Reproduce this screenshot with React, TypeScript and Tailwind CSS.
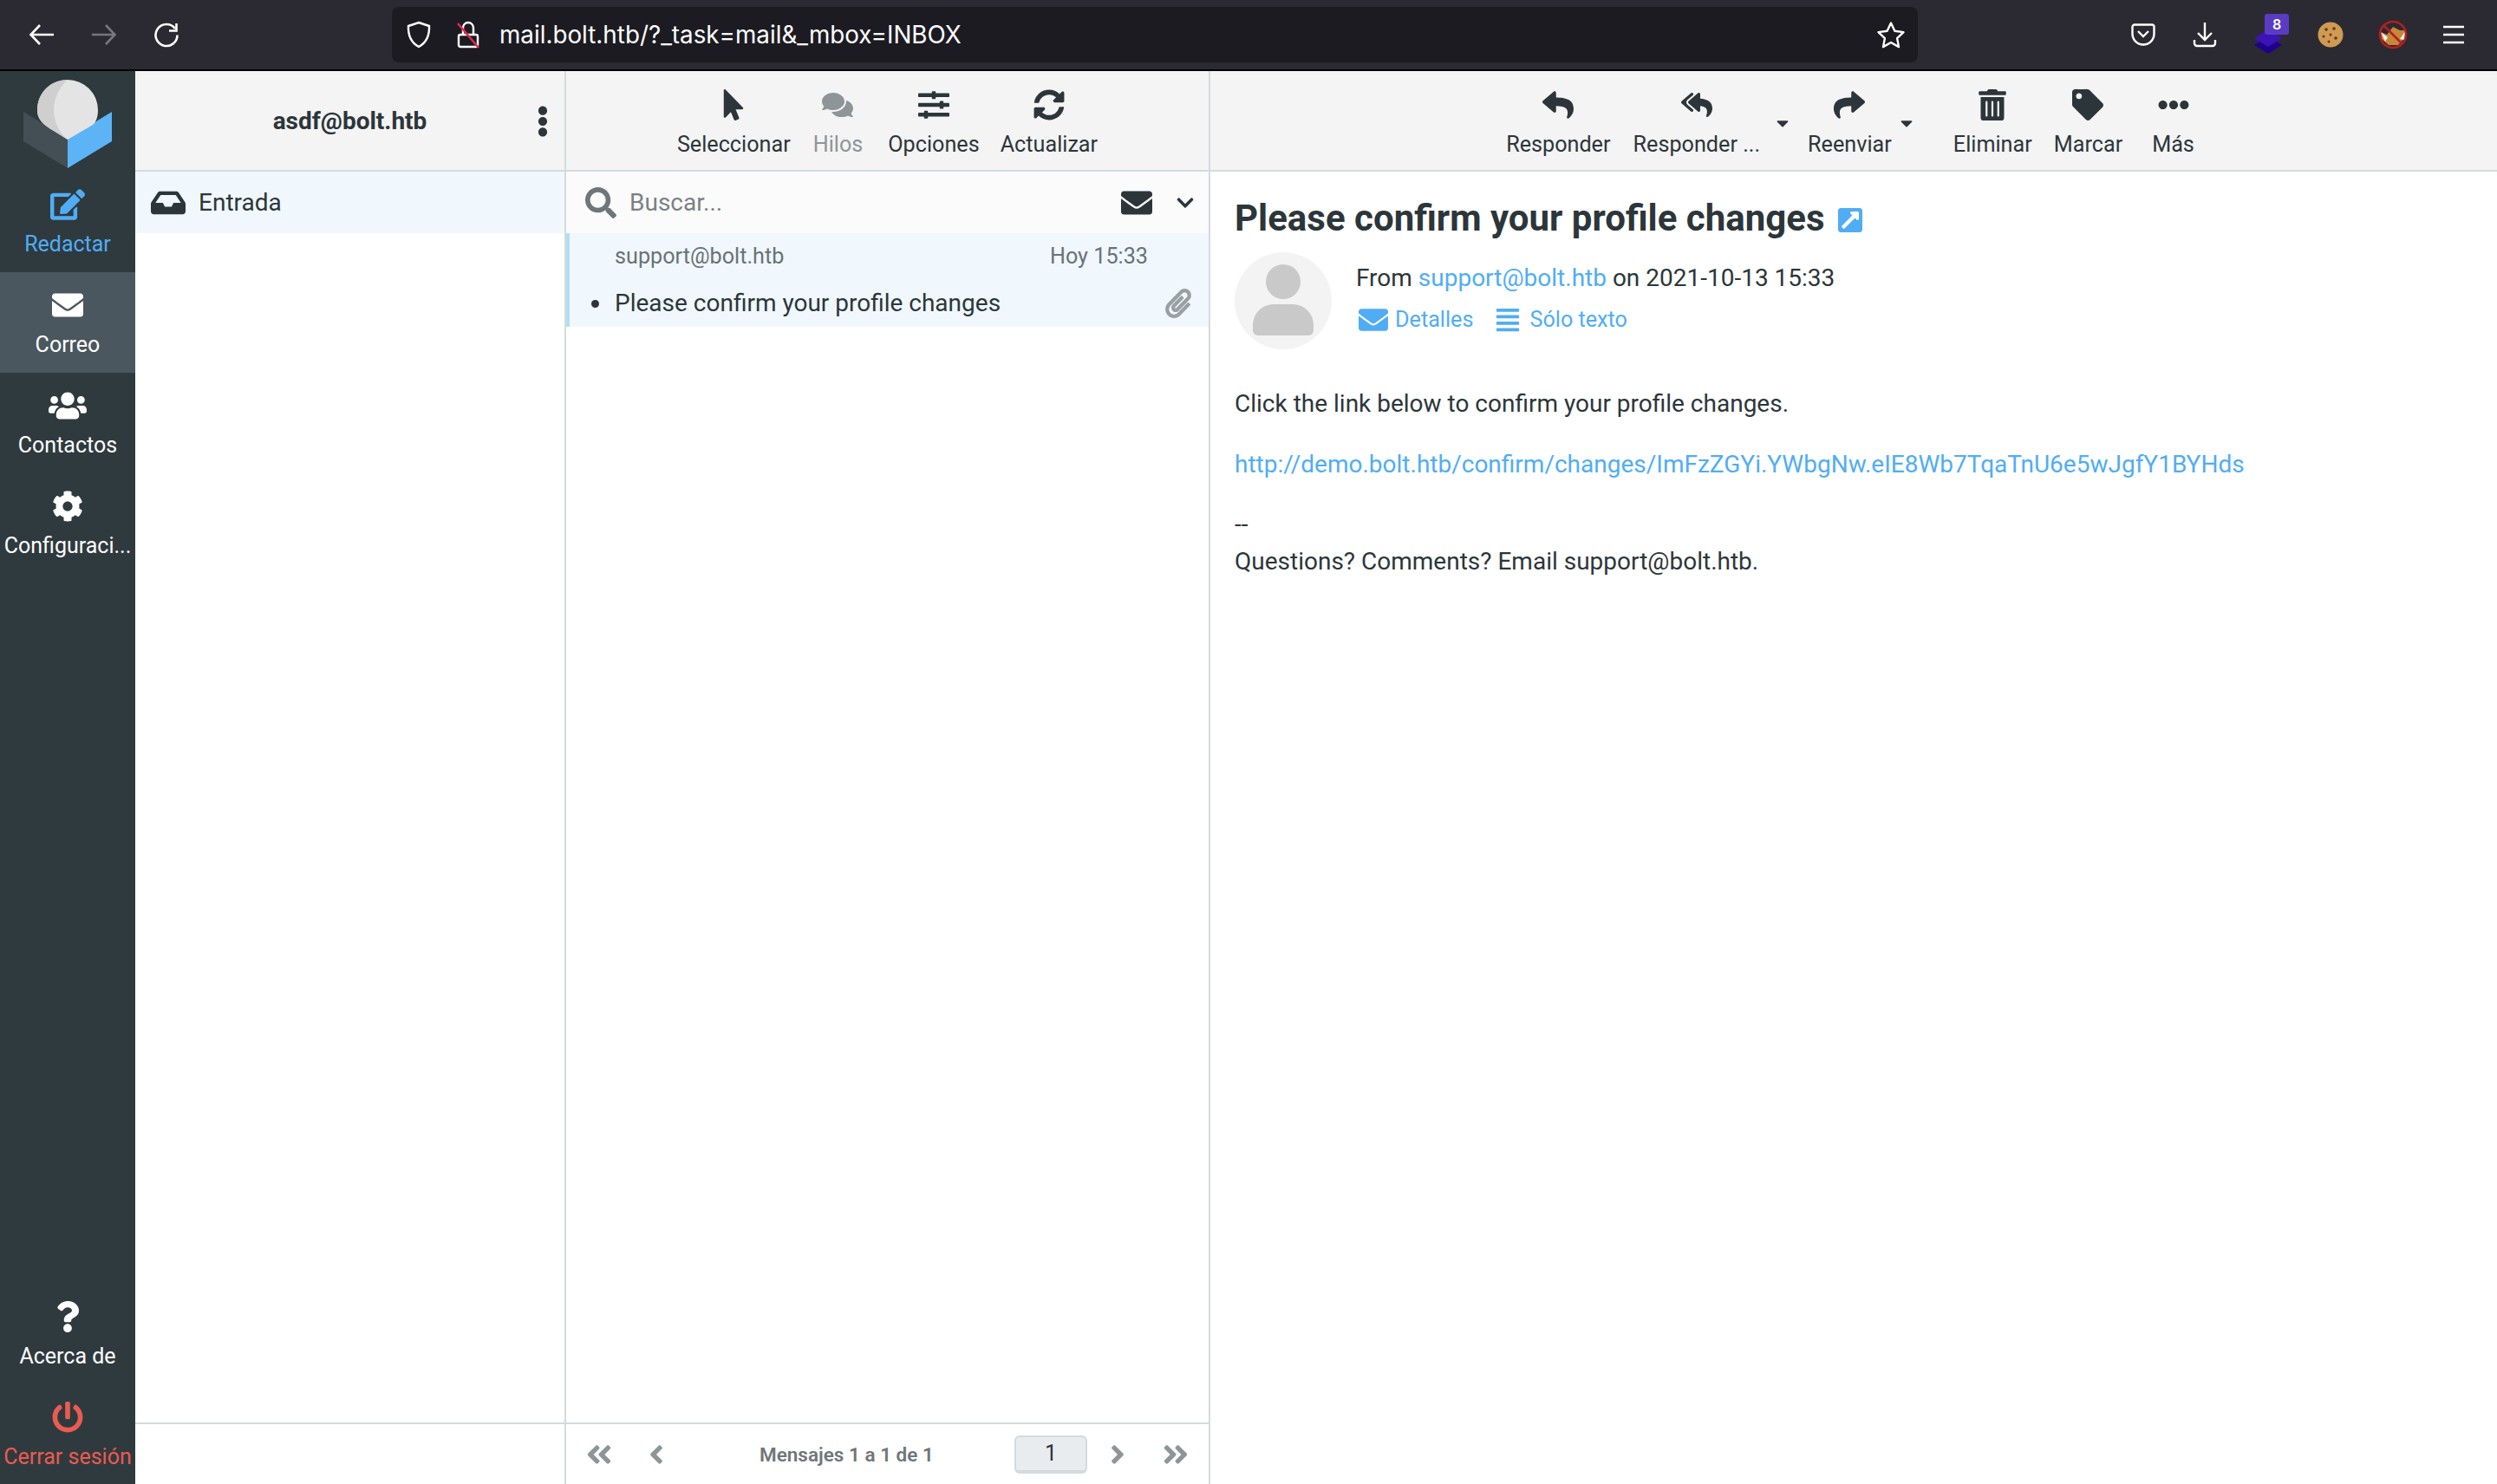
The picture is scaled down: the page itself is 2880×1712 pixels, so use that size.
import type { ReactNode } from "react";
import {
  FaAlignJustify,
  FaAngleDoubleLeft,
  FaAngleDoubleRight,
  FaAngleLeft,
  FaAngleRight,
  FaCaretDown,
  FaChevronDown,
  FaCog,
  FaComments,
  FaEdit,
  FaEllipsisH,
  FaEllipsisV,
  FaEnvelope,
  FaExternalLinkSquareAlt,
  FaInbox,
  FaMousePointer,
  FaPaperclip,
  FaPowerOff,
  FaQuestion,
  FaReply,
  FaReplyAll,
  FaSearch,
  FaShare,
  FaSlidersH,
  FaSyncAlt,
  FaTag,
  FaTrashAlt,
  FaUsers,
} from "react-icons/fa";

const BrowserBar = () => (
  <div className="flex h-[82px] items-start border-b-2 border-black bg-[#2b2a33] text-white">
    <div className="flex h-[80px] w-[452px] items-center pl-[33px] gap-[42px]">
      <svg width="30" height="28" viewBox="0 0 30 28" fill="none" stroke="white" strokeWidth="2.6">
        <path d="M29 14H3M13 3 2.500 14 13 25" />
      </svg>
      <svg width="30" height="28" viewBox="0 0 30 28" fill="none" stroke="#77767d" strokeWidth="2.6">
        <path d="M1 14h26M17 3l10.500 11L17 25" />
      </svg>
      <svg width="30" height="30" viewBox="0 0 30 30" fill="none" stroke="white" strokeWidth="2.6">
        <path d="M25 8a12.500 12.500 0 1 0 2.500 7.500" />
        <path d="M26.500 2v8.500H18" />
      </svg>
    </div>
    <div className="mt-[8px] flex h-[64px] w-[1760px] items-center rounded-[8px] bg-[#1c1b22] pl-[16px] pr-[16px]">
      <svg width="30" height="32" viewBox="0 0 30 32" fill="none" stroke="white" strokeWidth="2.4">
        <path d="M15 2 27 6c.500 11-3 19-12 24C6 25 2.500 17 3 6Z" />
      </svg>
      <svg className="ml-[27px]" width="30" height="32" viewBox="0 0 30 32" fill="none">
        <path d="M6 16h18a2 2 0 0 1 2 2v10a2 2 0 0 1-2 2H6a2 2 0 0 1-2-2V18a2 2 0 0 1 2-2Z" stroke="white" strokeWidth="2.4" />
        <path d="M9 16V8a6 6 0 0 1 12 0v8" stroke="white" strokeWidth="2.4" />
        <path d="M3 3 27 31" stroke="#e22850" strokeWidth="2.6" />
      </svg>
      <span className="ml-[21px] pt-[2px] font-['Inter',sans-serif] text-[27.800px] text-white">
        mail.bolt.htb/?_task=mail&amp;_mbox=INBOX
      </span>
      <svg className="ml-auto mr-[-2px]" width="34" height="32" viewBox="0 0 34 32" fill="none" stroke="white" strokeWidth="2.4" strokeLinejoin="round">
        <path d="m17 2.500 4.400 9.300 10.100 1.300-7.400 7 1.900 10L17 25l-9 5.100 1.900-10-7.400-7 10.100-1.300Z" />
      </svg>
    </div>
    <div className="flex h-[80px] flex-1 items-center pl-[246px] gap-[43px]">
      <svg width="28" height="26" viewBox="0 0 28 26" fill="none" stroke="white" strokeWidth="2.4">
        <path d="M4 1.500h20A2.500 2.500 0 0 1 26.500 4v8a12.500 12.500 0 0 1-25 0V4A2.500 2.500 0 0 1 4 1.500Z" />
        <path d="m8 9 6 6 6-6" />
      </svg>
      <svg width="28" height="30" viewBox="0 0 28 30" fill="none" stroke="white" strokeWidth="2.4">
        <path d="M14 1v19M6 13l8 8 8-8M2 21v4a3 3 0 0 0 3 3h18a3 3 0 0 0 3-3v-4" />
      </svg>
      <div className="relative h-[40px] w-[32px]">
        <svg className="mt-[14px]" width="32" height="28" viewBox="0 0 32 28">
          <path d="M16 8 32 18 16 28 0 18Z" fill="#20008a" />
          <path d="M16 0 32 10 16 20 0 10Z" fill="#3b14b8" />
        </svg>
        <span className="absolute left-[12px] top-[-4px] flex h-[24px] w-[28px] items-center justify-center rounded-[3px] bg-[#5b3bc4] font-['Inter',sans-serif] text-[16px] font-semibold text-white">
          8
        </span>
      </div>
      <svg className="ml-[-2px]" width="30" height="30" viewBox="0 0 30 30">
        <circle cx="15" cy="15" r="14.500" fill="#cf9a52" />
        <circle cx="10" cy="9" r="1.800" fill="#5e3a1a" />
        <circle cx="19" cy="8" r="1.800" fill="#5e3a1a" />
        <circle cx="15" cy="15" r="1.500" fill="#5e3a1a" />
        <circle cx="7" cy="17" r="1.500" fill="#5e3a1a" />
        <circle cx="21" cy="19" r="1.800" fill="#5e3a1a" />
        <circle cx="13" cy="23" r="1.500" fill="#5e3a1a" />
      </svg>
      <svg className="ml-[-3px]" width="34" height="34" viewBox="0 0 34 34">
        <path d="M3 14 10 17l7-9 8 4 6 0v8l-8 9H12L4 22Z" fill="#c9863b" />
        <path d="M3 14l8 6-3 5ZM31 13l-6 9 5 1Z" fill="#f3f0ea" />
        <circle cx="17" cy="17" r="15" fill="none" stroke="#b3201f" strokeWidth="2.500" />
        <path d="M6.500 6.500 27.500 27.500" stroke="#b3201f" strokeWidth="2.500" />
      </svg>
      <svg className="ml-[-3px]" width="26" height="22" viewBox="0 0 26 22" stroke="white" strokeWidth="2.400">
        <path d="M1 2h24M1 11h24M1 20h24" />
      </svg>
    </div>
  </div>
);

const Logo = () => (
  <div className="flex h-[116px] shrink-0 items-start">
    <svg width="156" height="116" viewBox="0 0 156 116">
      <path d="M27 47 78 78v34L27 81Z" fill="#434f54" />
      <path d="M129 47 78 78v34l51-31Z" fill="#5cb4f7" />
      <path d="M43 45a35 35 0 1 1 70 0c0 9-3 15-6 17L78 79 62 69C50 62 43 56 43 45Z" fill="#e4e4e4" />
      <path d="M78 10c-20 0-35 15-35 35 0 11 7 17 19 24l16 10c-9-7-16-20-16-34 0-13 6-26 16-35Z" fill="#cfcfcf" />
    </svg>
  </div>
);

const NavItem = ({
  icon,
  label,
  className = "text-white",
  pad = "pt-[19px]",
  size = "text-[36px]",
}: {
  icon: ReactNode;
  label: string;
  className?: string;
  pad?: string;
  size?: string;
}) => (
  <div className={`flex h-[116px] w-full shrink-0 flex-col items-center ${pad} ${className}`}>
    <div className={`flex h-[38px] items-center ${size}`}>{icon}</div>
    <div className="mt-[9px] w-full overflow-hidden text-center text-[25px] leading-[36px] whitespace-nowrap">{label}</div>
  </div>
);

const Sidebar = () => (
  <div className="flex w-[156px] shrink-0 flex-col bg-[#2f3a3e]">
    <Logo />
    <NavItem icon={<FaEdit />} label="Redactar" className="text-[#50adf5]" size="text-[40px]" />
    <NavItem icon={<FaEnvelope />} label="Correo" className="bg-[#4a575e] text-white" />
    <NavItem icon={<FaUsers />} label="Contactos" size="text-[44px]" />
    <NavItem icon={<FaCog />} label="Configuraci..." />
    <div className="mt-auto">
      <NavItem icon={<FaQuestion />} label="Acerca de" pad="pt-[20px]" />
      <NavItem icon={<FaPowerOff />} label="Cerrar sesión" pad="pt-[20px]" className="text-[#ea5b52]" />
    </div>
  </div>
);

const ToolButton = ({
  icon,
  label,
  muted,
  caret,
  className,
}: {
  icon: ReactNode;
  label: string;
  muted?: boolean;
  caret?: string;
  className?: string;
}) => (
  <div className={`relative flex flex-col items-center ${muted ? "text-[#8e9598]" : "text-[#2c363a]"} ${className ?? ""}`}>
    <div className="flex h-[40px] items-center text-[36px]">{icon}</div>
    <div className="mt-[8px] text-[25.200px] leading-[36px] whitespace-nowrap">{label}</div>
    {caret && <FaCaretDown className={`absolute top-[30px] text-[22px] text-[#2c363a] ${caret}`} />}
  </div>
);

const AccountColumn = () => (
  <div className="flex w-[497px] shrink-0 flex-col border-r-2 border-[#d4dbde]">
    <div className="relative flex h-[116px] shrink-0 items-center justify-center border-b-2 border-[#d4dbde] bg-[#f4f4f4] pt-[2px]">
      <span className="text-[28px] font-bold text-[#2c363a]">asdf@bolt.htb</span>
      <FaEllipsisV className="absolute right-[7px] top-[40px] text-[36px] text-[#2c363a]" />
    </div>
    <div className="flex h-[71px] shrink-0 items-center bg-[#f0f8fd] pl-[18px] text-[#2c363a]">
      <FaInbox className="text-[40px]" />
      <span className="ml-[15px] text-[28px]">Entrada</span>
    </div>
    <div className="flex-1 bg-white" />
    <div className="h-[71px] shrink-0 border-t-2 border-[#d4dbde] bg-white" />
  </div>
);

const ListColumn = () => (
  <div className="flex w-[743px] shrink-0 flex-col border-r-2 border-[#d4dbde]">
    <div className="flex h-[116px] shrink-0 items-start justify-center border-b-2 border-[#d4dbde] bg-[#f4f4f4] pt-[19px]">
      <ToolButton icon={<FaMousePointer />} label="Seleccionar" />
      <ToolButton className="ml-[26px]" icon={<FaComments />} label="Hilos" muted />
      <ToolButton className="ml-[29px]" icon={<FaSlidersH />} label="Opciones" />
      <ToolButton className="ml-[24px]" icon={<FaSyncAlt />} label="Actualizar" />
    </div>
    <div className="flex h-[71px] shrink-0 items-center bg-[#fbfbfb] pl-[22px] pr-[16px]">
      <FaSearch className="text-[36px] text-[#6f7679]" />
      <span className="ml-[15px] text-[28px] text-[#7a8184]">Buscar...</span>
      <FaEnvelope className="ml-auto text-[36px] text-[#2c363a]" />
      <FaChevronDown className="ml-[27px] text-[22px] text-[#2c363a]" />
    </div>
    <div className="flex h-[108px] shrink-0 flex-col border-l-4 border-[#b3ddf6] bg-[#f0f8fd] pl-[52px] pr-[14px]">
      <div className="flex h-[53px] items-center justify-between pr-[56px] text-[25.200px] text-[#6a7275]">
        <span>support@bolt.htb</span>
        <span>Hoy 15:33</span>
      </div>
      <div className="relative flex h-[55px] items-center text-[28px] text-[#2c363a]">
        <span className="absolute left-[-27px] top-[24px] h-[9px] w-[9px] rounded-full bg-[#2c363a]" />
        <span>Please confirm your profile changes</span>
        <FaPaperclip className="ml-auto mr-[4px] text-[34px] text-[#999fa2]" />
      </div>
    </div>
    <div className="flex-1 bg-white" />
    <div className="flex h-[71px] shrink-0 items-center border-t-2 border-[#d4dbde] bg-white pl-[18px] text-[#8e9598]">
      <div className="flex w-[40px] justify-center text-[34px]">
        <FaAngleDoubleLeft />
      </div>
      <div className="ml-[26px] flex w-[40px] justify-center text-[34px]">
        <FaAngleLeft />
      </div>
      <span className="ml-[99px] mt-[2px] w-[294px] text-[22.500px] font-semibold whitespace-nowrap text-[#6f7679]">Mensajes 1 a 1 de 1</span>
      <div className="flex h-[44px] w-[84px] items-center justify-center rounded-[6px] border-2 border-b-4 border-[#d4dadd] bg-[#e9ecef] text-[25.200px] text-[#2c363a]">
        1
      </div>
      <div className="ml-[15px] flex w-[40px] justify-center text-[34px]">
        <FaAngleRight />
      </div>
      <div className="ml-[27px] flex w-[40px] justify-center text-[34px]">
        <FaAngleDoubleRight />
      </div>
    </div>
  </div>
);

const MessageColumn = () => (
  <div className="flex min-w-0 flex-1 flex-col bg-white">
    <div className="flex h-[116px] shrink-0 items-start justify-center border-b-2 border-[#d4dbde] bg-[#f4f4f4] pr-[8px] pt-[19px]">
      <ToolButton icon={<FaReply />} label="Responder" />
      <ToolButton className="ml-[26px]" icon={<FaReplyAll />} label="Responder ..." caret="right-[-37px]" />
      <ToolButton className="ml-[55px]" icon={<FaShare />} label="Reenviar" caret="right-[-28px]" />
      <ToolButton className="ml-[71px]" icon={<FaTrashAlt />} label="Eliminar" />
      <ToolButton className="ml-[25px]" icon={<FaTag />} label="Marcar" />
      <ToolButton className="ml-[34px]" icon={<FaEllipsisH />} label="Más" />
    </div>
    <div className="pl-[28px] text-[#2c363a]">
      <div className="mt-[14px] flex h-[58px] items-center pt-[22px]">
        <span className="text-[42px] font-bold leading-[58px]">Please confirm your profile changes</span>
        <FaExternalLinkSquareAlt className="ml-[14px] mt-[4px] text-[32px] text-[#50adf5]" />
      </div>
      <div className="mt-[21px] flex">
        <div className="flex h-[112px] w-[112px] shrink-0 flex-col items-center overflow-hidden rounded-full bg-[#f3f3f3]">
          <div className="mt-[14px] h-[40px] w-[40px] rounded-full bg-[#c9c9c9]" />
          <div className="mt-[6px] h-[36px] w-[70px] rounded-t-[24px] rounded-b-[6px] bg-[#c9c9c9]" />
        </div>
        <div className="ml-[28px] pt-[13px]">
          <div className="text-[28px] leading-[34px]">
            From <span className="text-[#50adf5]">support@bolt.htb</span> on 2021-10-13 15:33
          </div>
          <div className="mt-[14px] flex items-center text-[25.200px] leading-[34px] text-[#50adf5]">
            <FaEnvelope className="ml-[3px] text-[34px]" />
            <span className="ml-[8px]">Detalles</span>
            <FaAlignJustify className="ml-[25px] text-[30px]" />
            <span className="ml-[10px]">Sólo texto</span>
          </div>
        </div>
      </div>
      <div className="mt-[41px] text-[28px] leading-[43px]">
        <p>Click the link below to confirm your profile changes.</p>
        <p className="mt-[27px] text-[#50adf5]">http://demo.bolt.htb/confirm/changes/ImFzZGYi.YWbgNw.eIE8Wb7TqaTnU6e5wJgfY1BYHds</p>
        <p className="mt-[26px]">--</p>
        <p>Questions? Comments? Email support@bolt.htb.</p>
      </div>
    </div>
  </div>
);

export default function App() {
  return (
    <div className="flex h-[1712px] w-[2880px] flex-col overflow-hidden bg-white font-['Roboto',sans-serif]">
      <BrowserBar />
      <div className="flex min-h-0 flex-1">
        <Sidebar />
        <AccountColumn />
        <ListColumn />
        <MessageColumn />
      </div>
    </div>
  );
}
